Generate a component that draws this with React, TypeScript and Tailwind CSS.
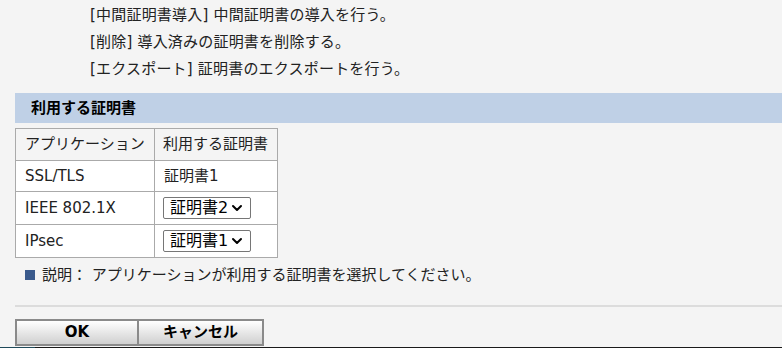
import { ChevronDown } from 'lucide-react';

const font = { fontFamily: '"DejaVu Sans", "Noto Sans CJK JP", "Noto Sans", sans-serif' };

const descLines = [
  '[中間証明書導入] 中間証明書の導入を行う。',
  '[削除] 導入済みの証明書を削除する。',
  '[エクスポート] 証明書のエクスポートを行う。',
];

function CertSelect({ value }: { value: string }) {
  return (
    <div className="flex h-[22px] w-[88px] items-center justify-between rounded-[2px] border border-[#767676] bg-white pl-[6px] pr-[5px] text-[16px] leading-none text-black">
      <span>{value}</span>
      <ChevronDown className="h-4 w-4" strokeWidth={3} />
    </div>
  );
}

export default function App() {
  return (
    <div
      className="relative flex h-[348px] w-[782px] flex-col overflow-hidden bg-[#f4f4f4] text-[15px] text-[#222]"
      style={font}
    >
      {/* Description lines */}
      <div className="pl-[90px] pt-[2px] tracking-[0.2px]">
        {descLines.map((l) => (
          <div key={l} className="h-[27px] leading-[27px]">
            {l}
          </div>
        ))}
      </div>

      {/* Section header */}
      <div className="ml-[15px] mt-[10px] flex h-[30px] items-center bg-[#bfd0e6] pl-[16px] text-[15px] font-bold text-black">
        利用する証明書
      </div>

      {/* Table */}
      <table className="ml-[15px] mt-[5px] w-[263px] border-collapse border border-[#aaaaaa] text-[15px]">
        <tbody>
          <tr className="h-[32px] bg-[#f4f4f4]">
            <td className="w-[139px] border border-[#aaaaaa] pl-[9px]">アプリケーション</td>
            <td className="border border-[#aaaaaa] pl-[8px]">利用する証明書</td>
          </tr>
          <tr className="h-[31px] bg-white">
            <td className="border border-[#aaaaaa] pl-[9px]">SSL/TLS</td>
            <td className="border border-[#aaaaaa] pl-[9px]">証明書1</td>
          </tr>
          <tr className="h-[33px] bg-white">
            <td className="border border-[#aaaaaa] pl-[9px]">IEEE 802.1X</td>
            <td className="border border-[#aaaaaa] pl-[8px]">
              <CertSelect value="証明書2" />
            </td>
          </tr>
          <tr className="h-[33px] bg-white">
            <td className="border border-[#aaaaaa] pl-[9px]">IPsec</td>
            <td className="border border-[#aaaaaa] pl-[8px]">
              <CertSelect value="証明書1" />
            </td>
          </tr>
        </tbody>
      </table>

      {/* Note */}
      <div className="ml-[25px] mt-[4px] flex h-[26px] items-center gap-[7px]">
        <span className="h-[10px] w-[10px] bg-[#3a5a8c]" />
        <span>説明：&nbsp;アプリケーションが利用する証明書を選択してください。</span>
      </div>

      {/* Separator */}
      <div className="ml-[15px] mt-[17px] h-[2px] bg-[#dcdcdc]" />

      {/* Buttons */}
      <div className="ml-[15px] mt-[12px] flex">
        <button className="h-[27px] w-[124px] border-2 border-[#8a8a8a] bg-gradient-to-b from-white to-[#d0d0d0] text-[15px] font-bold text-black">
          OK
        </button>
        <button className="h-[27px] w-[125px] border-2 border-l-0 border-[#8a8a8a] bg-gradient-to-b from-white to-[#d0d0d0] text-[15px] font-bold text-black">
          キャンセル
        </button>
      </div>

      <div className="absolute bottom-0 left-0 flex h-px w-full">
        <div className="w-[35px] bg-[#1f4a5a]" />
        <div className="flex-1 bg-[#1a1a1a]" />
      </div>
    </div>
  );
}
